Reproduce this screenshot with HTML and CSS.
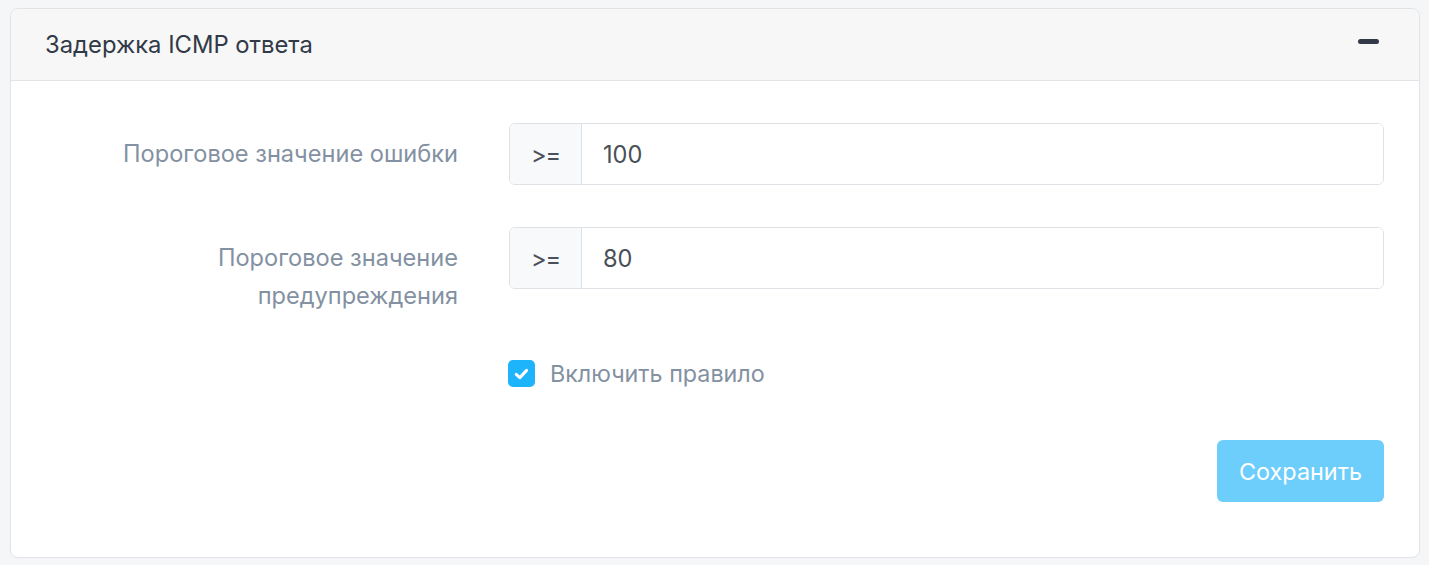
FILE: index.html
```
<!DOCTYPE html>
<html lang="ru">
<head>
<meta charset="utf-8">
<link rel="stylesheet" href="styles.css">
</head>
<body>
<div class="card">
  <div class="card-header">
    <h2 class="title">Задержка ICMP ответа</h2>
    <span class="collapse-btn"></span>
  </div>
  <div class="card-body">
    <div class="form-row">
      <label class="form-label">Пороговое значение ошибки</label>
      <div class="input-group">
        <span class="addon">&gt;=</span>
        <input class="input" type="text" value="100">
      </div>
    </div>
    <div class="form-row">
      <label class="form-label">Пороговое значение<br>предупреждения</label>
      <div class="input-group">
        <span class="addon">&gt;=</span>
        <input class="input" type="text" value="80">
      </div>
    </div>
    <div class="form-row check-row">
      <div></div>
      <label class="check">
        <span class="check-box">
          <svg width="15" height="12" viewBox="0 0 15 12"><path d="M2.2 6.4 L5.8 9.6 L12.6 2.4" fill="none" stroke="#fff" stroke-width="3" stroke-linecap="round" stroke-linejoin="round"/></svg>
        </span>
        <span class="check-text">Включить правило</span>
      </label>
    </div>
    <div class="actions">
      <button class="btn-save" type="button">Сохранить</button>
    </div>
  </div>
</div>
</body>
</html>
```
FILE: styles.css
```
* { box-sizing: border-box; }
html, body { margin: 0; padding: 0; }
body {
  background: #f5f6f8;
  font-family: Inter, "Noto Sans", "Liberation Sans", sans-serif;
  padding: 8px 9px 7px 10px;
}
.card {
  background: #fff;
  border: 1px solid #e1e3e6;
  border-radius: 8px;
  overflow: hidden;
  height: 550px;
}
.card-header {
  height: 72px;
  background: #f7f7f8;
  border-bottom: 1px solid #e1e3e6;
  display: flex;
  align-items: center;
  justify-content: space-between;
  padding: 0 40px 0 34px;
}
.title {
  margin: 0;
  font-size: 23.8px;
  font-weight: 400;
  color: #313a46;
}
.collapse-btn {
  width: 21px;
  height: 5px;
  border-radius: 3px;
  background: #313a46;
  margin-top: -6px;
}
.card-body {
  padding: 42px 35px 0 34px;
}
.form-row {
  display: grid;
  grid-template-columns: 413px 1fr;
  column-gap: 51px;
  margin-bottom: 42px;
  align-items: start;
}
.form-label {
  text-align: right;
  font-size: 23.6px;
  line-height: 38px;
  color: #8391a2;
  padding-top: 12px;
}
.input-group {
  display: flex;
  height: 62px;
  border: 1px solid #dee2e6;
  border-radius: 6px;
  overflow: hidden;
}
.addon {
  width: 72px;
  background: #f8f9fa;
  border-right: 1px solid #dee2e6;
  display: flex;
  align-items: center;
  justify-content: center;
  font-size: 23.6px;
  color: #495057;
  letter-spacing: -1px;
}
.input {
  flex: 1;
  border: none;
  outline: none;
  font-family: inherit;
  font-size: 23.6px;
  color: #495057;
  padding: 0 21px;
  background: #fff;
}
.check-row { margin-top: 44px; margin-bottom: 0; }
.check {
  display: flex;
  align-items: center;
  gap: 15px;
  margin-left: -1px;
}
.check-box {
  width: 27px;
  height: 27px;
  border-radius: 5px;
  background: #1eb4fb;
  display: flex;
  align-items: center;
  justify-content: center;
}
.check-text {
  font-size: 23.3px;
  color: #8391a2;
}
.actions {
  display: flex;
  justify-content: flex-end;
  margin-top: 52px;
}
.btn-save {
  width: 167px;
  height: 62px;
  border: none;
  border-radius: 6px;
  background: #6dcefc;
  color: #fff;
  font-family: inherit;
  font-size: 23.4px;
}
```
